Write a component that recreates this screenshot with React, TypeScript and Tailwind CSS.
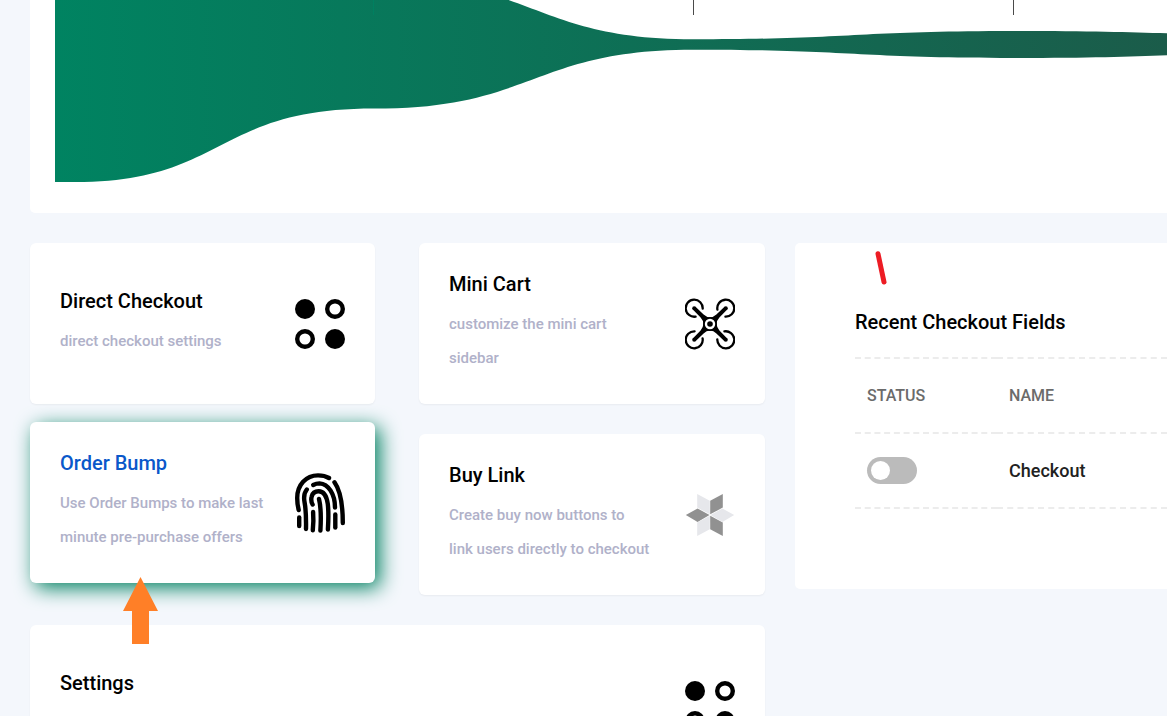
import { ReactNode, useState } from "react";

type FeatureCardProps = {
  title: string;
  description?: string;
  icon: ReactNode;
  highlighted?: boolean;
  className?: string;
  children?: ReactNode;
};

type CheckoutField = {
  id: string;
  name: string;
  enabled: boolean;
};

const initialFields: CheckoutField[] = [{ id: "checkout", name: "Checkout", enabled: false }];

function DotsIcon() {
  return (
    <svg width="50" height="50" viewBox="0 0 50 50" aria-hidden="true" className="shrink-0">
      <circle cx="10" cy="10" r="10" />
      <circle cx="40" cy="40" r="10" />
      <g fill="none" stroke="#000" strokeWidth="4.4">
        <circle cx="40" cy="10" r="7.8" />
        <circle cx="10" cy="40" r="7.8" />
      </g>
    </svg>
  );
}

function DroneIcon() {
  return (
    <svg width="50" height="52" viewBox="-25 -26 50 52" aria-hidden="true" className="shrink-0">
      {[0, 90, 180, 270].map((angle) => (
        <g key={angle} transform={`rotate(${angle})`}>
          <path
            d="M-7.3 -15.4A8.5 8.5 0 1 0 -14.4 -7.4"
            fill="none"
            stroke="#000"
            strokeWidth="2.3"
            strokeLinecap="round"
          />
          <path d="M-17.2 -14.5L-14.5 -17.2L-6.4 -9.4Q-3.6 -6.8 0 -6.6L0 0L-6.6 0Q-6.8 -3.6 -9.4 -6.4Z" />
          <circle cx="-15.8" cy="-15.8" r="2" />
        </g>
      ))}
      <circle r="7" />
      <circle r="5.2" fill="#fff" />
      <circle r="2.8" />
    </svg>
  );
}

function FingerprintIcon() {
  return (
    <svg width="50" height="60" viewBox="0 0 50 60" aria-hidden="true" className="shrink-0">
      <g fill="none" stroke="#000" strokeWidth="4.4" strokeLinecap="round">
        <path d="M3.7 37C2.4 32 2.2 29 2.2 25C2.2 12 11 2.4 23 2.4C27 2.4 31 3.2 34 5" />
        <path d="M39.5 9.3C45 17 47.8 31 47.8 50" />
        <path d="M18.2 12C20.5 10.8 22.5 10.4 24.5 10.4C33.5 11 40 21 40 34.5" />
        <path d="M11.8 16.5C9 20 8.6 24.5 9.6 29.5C11.2 38 11.2 45 11 56" />
        <path d="M17.6 31.5C16.2 29 16 26 16.7 23.5C17.6 19.5 20.2 18.2 23.7 18.2C29.6 18.2 31.8 24 32.8 31C33.6 38 33.6 45 32.9 56.5" />
        <path d="M24 26C26 34 26.2 44 25.4 57.6" />
        <path d="M18.1 39C18.6 45 18.4 51 17.8 57.3" />
        <path d="M4.2 44.5V53" />
        <path d="M40.3 41.5V54.5" />
      </g>
    </svg>
  );
}

function StarIcon() {
  return (
    <svg width="50" height="44" viewBox="0 0 50 44" aria-hidden="true" className="shrink-0">
      <g fill="#919191">
        <path d="M25.2 21.3V7.8L37.8 1V14.6Z" />
        <path d="M0.8 22L12.6 15.5L24.5 22L12.6 29Z" />
        <path d="M25.2 22.7L37.8 29.4V43L25.2 36.2Z" />
      </g>
      <g fill="#e6e7eb">
        <path d="M24.8 21.3V7.8L12.2 1V14.6Z" />
        <path d="M49.2 22L37.4 15.5L25.5 22L37.4 29Z" />
        <path d="M24.8 22.7L12.2 29.4V43L24.8 36.2Z" />
      </g>
    </svg>
  );
}

function FunnelChart() {
  return (
    <section className="h-[213px] rounded-bl-[5px] bg-white pl-[25px]">
      <svg
        viewBox="0 0 1112 182"
        preserveAspectRatio="none"
        className="block h-[182px] w-full"
        role="img"
        aria-label="Checkout funnel"
      >
        <defs>
          <linearGradient id="funnel" x1="0" x2="1112" y1="0" y2="0" gradientUnits="userSpaceOnUse">
            <stop offset="0" stopColor="#008361" />
            <stop offset="1" stopColor="#1b5c4a" />
          </linearGradient>
        </defs>
        <path
          fill="url(#funnel)"
          d="M0 -93C160 -93 160 -21 319 -21S479 39.3 638 39.3S798 31 958 31S1118 36 1278 36V52C1118 52 1118 58 958 58S798 49.7 638 49.7S479 108.6 319 108.6S170 182 20 182H0Z"
        />
        <rect x="318" y="0" width="1" height="15" fill="#008060" />
        <rect x="638" y="0" width="1" height="15" fill="#4a4a4a" />
        <rect x="958" y="0" width="1" height="15" fill="#4a4a4a" />
      </svg>
    </section>
  );
}

function FeatureCard({
  title,
  description,
  icon,
  highlighted = false,
  className = "",
  children,
}: FeatureCardProps) {
  return (
    <a
      href="#"
      className={`relative flex min-h-[161px] items-center justify-between gap-4 rounded-md bg-white px-[30px] pt-[30px] pb-[29px] ${
        highlighted
          ? "z-10 -translate-y-3 shadow-[5px_5px_20px_#008060]"
          : "shadow-[0_1px_2px_rgba(0,0,0,0.05)]"
      } ${className}`}
    >
      <div className="min-w-0">
        <h2
          className={`mb-3 text-xl leading-[22px] font-medium ${
            highlighted ? "text-[#0a58ca]" : "text-black"
          }`}
        >
          {title}
        </h2>
        <p className="min-h-[34px] text-[15px] leading-[34px] font-medium whitespace-pre-line text-[#b0b1c9]">
          {description}
        </p>
      </div>
      {icon}
      {children}
    </a>
  );
}

function RecentFields() {
  const [fields, setFields] = useState(initialFields);

  const toggleField = (id: string) => {
    setFields((current) =>
      current.map((field) => (field.id === id ? { ...field, enabled: !field.enabled } : field)),
    );
  };

  return (
    <section className="relative min-h-[346px] rounded-l-[5px] bg-white pt-[60px] pb-20 pl-[60px]">
      <svg
        width="14"
        height="36"
        viewBox="0 0 14 36"
        aria-hidden="true"
        className="absolute top-2 left-[79px]"
      >
        <path d="M4 2.8L10 31" stroke="#ed1c24" strokeWidth="5" strokeLinecap="round" />
      </svg>

      <h2 className="mb-4 text-xl leading-[38px] font-medium text-black">Recent Checkout Fields</h2>
      <table className="w-full table-fixed text-left">
        <thead>
          <tr className="h-[75px] text-base text-[#6b6b6b]">
            <th className="w-[142px] border-t-2 border-dashed border-[#ececec] px-3 font-medium">STATUS</th>
            <th className="border-t-2 border-dashed border-[#ececec] px-3 font-medium">NAME</th>
          </tr>
        </thead>
        <tbody>
          {fields.map((field) => (
            <tr key={field.id} className="h-[75px] text-lg text-[#212121]">
              <td className="border-y-2 border-dashed border-[#ececec] px-3">
                <label className="flex w-fit cursor-pointer">
                  <input
                    type="checkbox"
                    className="peer sr-only"
                    aria-label={`Enable ${field.name}`}
                    checked={field.enabled}
                    onChange={() => toggleField(field.id)}
                  />
                  <span className="flex h-[27px] w-[50px] items-center rounded-full bg-[#bbb] p-1 peer-checked:justify-end peer-checked:bg-[#008060]">
                    <span className="size-[19px] rounded-full bg-white" />
                  </span>
                </label>
              </td>
              <td className="border-y-2 border-dashed border-[#ececec] px-3 font-medium">{field.name}</td>
            </tr>
          ))}
        </tbody>
      </table>
    </section>
  );
}

export default function App() {
  return (
    <main className="min-h-screen overflow-x-hidden bg-[#f4f7fc] pb-[30px] pl-[30px] font-[Roboto,sans-serif]">
      <FunnelChart />

      <div className="mt-[30px] grid grid-cols-[minmax(0,735fr)_minmax(0,372fr)] items-start gap-[30px]">
        <div className="grid grid-cols-[minmax(0,345fr)_minmax(0,346fr)] gap-x-11 gap-y-[30px]">
          <FeatureCard
            title="Direct Checkout"
            description="direct checkout settings"
            icon={<DotsIcon />}
          />
          <FeatureCard
            title="Mini Cart"
            description={"customize the mini cart\nsidebar"}
            icon={<DroneIcon />}
          />
          <FeatureCard
            title="Order Bump"
            description={"Use Order Bumps to make last\nminute pre-purchase offers"}
            icon={<FingerprintIcon />}
            highlighted
          >
            <svg
              width="35"
              height="67"
              viewBox="0 0 35 67"
              aria-hidden="true"
              className="absolute top-[155px] left-[93px]"
            >
              <path d="M17.5 0L35 34H26V67H9V34H0Z" fill="#ff7f27" />
            </svg>
          </FeatureCard>
          <FeatureCard
            title="Buy Link"
            description={"Create buy now buttons to\nlink users directly to checkout"}
            icon={<StarIcon />}
          />
          <FeatureCard title="Settings" icon={<DotsIcon />} className="col-span-2" />
        </div>

        <RecentFields />
      </div>
    </main>
  );
}
